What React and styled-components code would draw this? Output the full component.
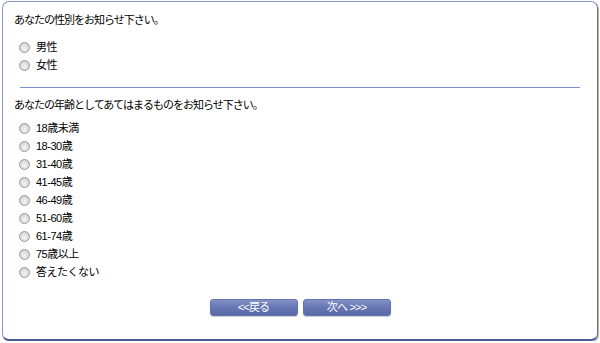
import React from 'react'
import styled, { createGlobalStyle } from 'styled-components';

const GlobalStyle = createGlobalStyle`
  html, body {
    margin: 0;
    padding: 0;
    background: #ffffff;
  }
  body {
    font-family: "Liberation Sans", "Noto Sans CJK JP", sans-serif;
    color: #000;
  }
`;

const genders = ['男性', '女性'];
const ages = ['18歳未満', '18-30歳', '31-40歳', '41-45歳', '46-49歳', '51-60歳', '61-74歳', '75歳以上', '答えたくない'];

const App = () => {
  return (
    <>
      <GlobalStyle />
      <Panel>
        <Question>あなたの性別をお知らせ下さい。</Question>
        <OptionList>
          {genders.map(g => (
            <Option key={g}>
              <Radio />
              <Label>{g}</Label>
            </Option>
          ))}
        </OptionList>
        <Divider />
        <Question>あなたの年齢としてあてはまるものをお知らせ下さい。</Question>
        <OptionList $top={5}>
          {ages.map(a => (
            <Option key={a}>
              <Radio />
              <Label>{a}</Label>
            </Option>
          ))}
        </OptionList>
        <ButtonRow>
          <NavButton>&lt;&lt;戻る</NavButton>
          <NavButton>次へ &gt;&gt;&gt;</NavButton>
        </ButtonRow>
      </Panel>
    </>
  )
}

const Panel = styled.div`
  box-sizing: border-box;
  margin: 1px 0 0 2px;
  width: 596px;
  height: 340px;
  border: 1px solid #8796c6;
  border-right-color: #5f70a8;
  border-bottom: 2px solid #475990;
  border-radius: 7px;
  box-shadow: 1px 1px 0 #b8b4a8;
  padding: 9px 15px 0 11px;
  display: flex;
  flex-direction: column;
`;

const Question = styled.div`
  height: 18px;
  line-height: 18px;
  font-size: 11px;
  letter-spacing: -1px;
`;

const OptionList = styled.div`
  display: flex;
  flex-direction: column;
  margin-top: ${p => p.$top ?? 9}px;
`;

const Option = styled.label`
  display: flex;
  align-items: center;
  height: 18px;
  padding-left: 5px;
`;

const Radio = styled.span`
  box-sizing: border-box;
  width: 11px;
  height: 11px;
  border-radius: 50%;
  border: 1px solid #9a9a9a;
  background: radial-gradient(circle at 50% 60%, #f4f4f4 0%, #dcdcdc 55%, #c4c4c4 100%);
  margin-right: 6px;
`;

const Label = styled.span`
  font-size: 11px;
  letter-spacing: -0.5px;
  line-height: 18px;
  color: #000;
`;

const Divider = styled.div`
  margin: 13px 2px 8px 6px;
  height: 1px;
  background: #7f8fca;
`;

const ButtonRow = styled.div`
  display: flex;
  justify-content: center;
  gap: 5px;
  margin-top: 18px;
  padding-left: 4px;
`;

const NavButton = styled.button`
  box-sizing: border-box;
  width: 88px;
  height: 17px;
  padding: 0;
  border: 1px solid #6373ac;
  border-radius: 3px;
  background: linear-gradient(#8391c6, #6676b3 50%, #5a6aa9);
  box-shadow: 0 1px 1px #c8ccd8;
  color: #fff;
  font-family: "Liberation Sans", "Noto Sans CJK JP", sans-serif;
  font-size: 11px;
  letter-spacing: -0.8px;
  line-height: 15px;
  cursor: pointer;
`;

export default App
